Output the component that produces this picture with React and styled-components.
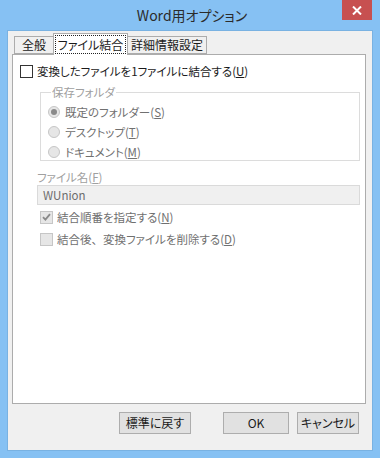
import React from "react";
import styled, { createGlobalStyle } from "styled-components";

const GlobalStyle = createGlobalStyle`
  html, body {
    margin: 0;
    padding: 0;
    background: #86c1f3;
  }
  body {
    font-family: "Noto Sans CJK JP", "Noto Sans", sans-serif;
    font-size: 11.5px;
    font-feature-settings: "palt";
  }
`;

const tabs = [
  { label: "全般", width: 40 },
  { label: "ファイル結合", width: 75, active: true },
  { label: "詳細情報設定", width: 80 },
];

const folders = [
  { label: "既定のフォルダー", key: "S", checked: true },
  { label: "デスクトップ", key: "T" },
  { label: "ドキュメント", key: "M" },
];

const Key = ({ children }) => (
  <>
    (<u>{children}</u>)
  </>
);

const CheckIcon = () => (
  <svg width="9" height="8" viewBox="0 0 9 8">
    <path d="M1 4.2 L3.4 6.6 L8 1.2" fill="none" stroke="#8a8a8a" strokeWidth="1.8" />
  </svg>
);

const App = () => {
  return (
    <>
      <GlobalStyle />
      <Window>
        <TitleBar>
          <Title>Word用オプション</Title>
          <CloseButton>
            <svg width="10" height="9" viewBox="0 0 10 9">
              <path d="M1 0.5 L9 8.5 M9 0.5 L1 8.5" stroke="#fff" strokeWidth="2" />
            </svg>
          </CloseButton>
        </TitleBar>
        <Client>
          <TabStrip>
            {tabs.map((t) => (
              <Tab key={t.label} $active={t.active} $width={t.width}>
                {t.active ? <Focus>{t.label}</Focus> : t.label}
              </Tab>
            ))}
          </TabStrip>
          <Panel>
            <Row>
              <Box />
              <Label>
                変換したファイルを1ファイルに結合する<Key>U</Key>
              </Label>
            </Row>
            <Group>
              <Legend>保存フォルダ</Legend>
              {folders.map((f) => (
                <RadioRow key={f.key}>
                  <Radio $checked={f.checked} />
                  <Label $disabled>
                    {f.label}
                    <Key>{f.key}</Key>
                  </Label>
                </RadioRow>
              ))}
            </Group>
            <FieldLabel>
              ファイル名<Key>F</Key>
            </FieldLabel>
            <TextInput>WUnion</TextInput>
            <Row $indent={20} $top={4}>
              <Box $disabled>
                <CheckIcon />
              </Box>
              <Label $disabled>
                結合順番を指定する<Key>N</Key>
              </Label>
            </Row>
            <Row $indent={20} $top={6}>
              <Box $disabled />
              <Label $disabled>
                結合後<Comma>、</Comma>変換ファイルを削除する<Key>D</Key>
              </Label>
            </Row>
          </Panel>
          <ButtonBar>
            <Button $width={72} $gap={32}>標準に戻す</Button>
            <Button $width={66} $gap={8}>OK</Button>
            <Button $width={62}>キャンセル</Button>
          </ButtonBar>
        </Client>
      </Window>
    </>
  );
};

export default App;

const Window = styled.div`
  width: 380px;
  height: 458px;
  box-sizing: border-box;
  background: #86c1f3;
  padding: 0 8px 8px 8px;
  display: flex;
  flex-direction: column;
`;

const TitleBar = styled.div`
  position: relative;
  height: 31px;
  display: flex;
  align-items: center;
  justify-content: center;
`;

const Title = styled.div`
  font-size: 14px;
  color: #2b2b2b;
  margin-top: -2px;
  margin-left: 4px;
`;

const CloseButton = styled.div`
  position: absolute;
  top: 0;
  right: 0;
  width: 30px;
  height: 20px;
  background: #c75050;
  display: flex;
  align-items: center;
  justify-content: center;
`;

const Client = styled.div`
  flex: 1;
  background: #f0f0f0;
  display: flex;
  flex-direction: column;
  padding: 3px 6px 0 4px;
  box-shadow: 0 0 0 1px #79b2e2;
`;

const TabStrip = styled.div`
  display: flex;
  align-items: flex-end;
  height: 21px;
  padding-left: 2px;
  position: relative;
  z-index: 1;
  margin-bottom: -1px;
`;

const Tab = styled.div`
  box-sizing: border-box;
  width: ${(p) => p.$width}px;
  height: ${(p) => (p.$active ? 22 : 18)}px;
  border: 1px solid #acacac;
  border-bottom: ${(p) => (p.$active ? "none" : "1px solid #acacac")};
  background: ${(p) => (p.$active ? "#fff" : "#f0f0f0")};
  margin: ${(p) => (p.$active ? "0 -1px" : "0 0 1px 0")};
  position: relative;
  z-index: ${(p) => (p.$active ? 2 : 1)};
  display: flex;
  align-items: center;
  justify-content: center;
  color: #1a1a1a;
  font-size: 12px;
  line-height: 14px;
  white-space: nowrap;
`;

const Focus = styled.span`
  outline: 1px dotted #222;
  outline-offset: 0;
  padding: 1px 2px;
  line-height: 15px;
`;

const Panel = styled.div`
  box-sizing: border-box;
  width: 354px;
  height: 350px;
  background: #fff;
  border: 1px solid #acacac;
  padding: 8px 0 0 7px;
  display: flex;
  flex-direction: column;
  align-items: flex-start;
`;

const Row = styled.div`
  display: flex;
  align-items: center;
  height: 16px;
  margin-left: ${(p) => p.$indent || 0}px;
  margin-top: ${(p) => p.$top || 0}px;
  gap: 4px;
`;

const Box = styled.div`
  box-sizing: border-box;
  width: 13px;
  height: 13px;
  border: 1px solid ${(p) => (p.$disabled ? "#c6c6c6" : "#333")};
  background: ${(p) => (p.$disabled ? "#e6e6e6" : "#fff")};
  display: flex;
  align-items: center;
  justify-content: center;
`;

const Label = styled.span`
  color: ${(p) => (p.$disabled ? "#707070" : "#1a1a1a")};
  line-height: 16px;
  white-space: nowrap;
  u {
    text-underline-offset: 1px;
  }
`;

const Comma = styled.span`
  font-feature-settings: normal;
`;

const Group = styled.fieldset`
  box-sizing: border-box;
  margin: 7px 0 0 20px;
  width: 320px;
  min-width: 0;
  border: 1px solid #dcdcdc;
  padding: 6px 0 0 7px;
  display: flex;
  flex-direction: column;
  gap: 4px;
`;

const Legend = styled.legend`
  color: #a0a0a0;
  line-height: 12px;
  padding: 0 1px;
  margin-left: 3px;
`;

const RadioRow = styled.div`
  display: flex;
  align-items: center;
  height: 16px;
  gap: 5px;
`;

const Radio = styled.div`
  box-sizing: border-box;
  width: 12px;
  height: 12px;
  border-radius: 50%;
  border: 1px solid #c6c6c6;
  background: #e6e6e6;
  display: flex;
  align-items: center;
  justify-content: center;
  &::after {
    content: "";
    display: ${(p) => (p.$checked ? "block" : "none")};
    width: 6px;
    height: 6px;
    border-radius: 50%;
    background: #8a8a8a;
  }
`;

const FieldLabel = styled.div`
  color: #a0a0a0;
  line-height: 12px;
  margin: 10px 0 0 17px;
`;

const TextInput = styled.div`
  box-sizing: border-box;
  width: 323px;
  height: 20px;
  margin: 2px 0 0 17px;
  border: 1px solid #dadada;
  background: #f0f0f0;
  color: #6d6d6d;
  padding: 0 5px;
  line-height: 18px;
`;

const ButtonBar = styled.div`
  display: flex;
  justify-content: flex-end;
  padding: 8px 7px 0 0;
`;

const Button = styled.div`
  box-sizing: border-box;
  width: ${(p) => p.$width}px;
  height: 22px;
  margin-right: ${(p) => p.$gap || 0}px;
  border: 1px solid #adadad;
  background: #e1e1e1;
  color: #1a1a1a;
  font-size: 12px;
  display: flex;
  align-items: center;
  justify-content: center;
  line-height: 14px;
`;
